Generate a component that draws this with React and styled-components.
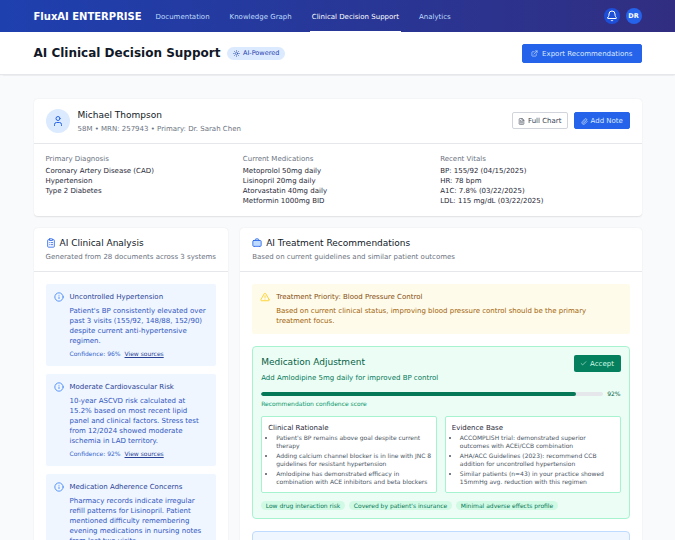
import React from 'react';
import styled, { createGlobalStyle } from 'styled-components';
import {
  Bell, BriefcaseMedical, ClipboardList, ExternalLink, FileText, Info, Paperclip,
  Check, Sun, TriangleAlert, User,
} from 'lucide-react';

const FONT = '"DejaVu Sans", sans-serif';

const NAV_LINKS = [
  { label: 'Documentation' },
  { label: 'Knowledge Graph' },
  { label: 'Clinical Decision Support', active: true },
  { label: 'Analytics' },
];

const SUMMARY = [
  { label: 'Primary Diagnosis', lines: ['Coronary Artery Disease (CAD)', 'Hypertension', 'Type 2 Diabetes'] },
  { label: 'Current Medications', lines: ['Metoprolol 50mg daily', 'Lisinopril 20mg daily', 'Atorvastatin 40mg daily', 'Metformin 1000mg BID'] },
  { label: 'Recent Vitals', lines: ['BP: 155/92 (04/15/2025)', 'HR: 78 bpm', 'A1C: 7.8% (03/22/2025)', 'LDL: 115 mg/dL (03/22/2025)'] },
];

const INSIGHTS = [
  {
    title: 'Uncontrolled Hypertension',
    body: "Patient's BP consistently elevated over past 3 visits (155/92, 148/88, 152/90) despite current anti-hypertensive regimen.",
    confidence: 96,
  },
  {
    title: 'Moderate Cardiovascular Risk',
    body: '10-year ASCVD risk calculated at 15.2% based on most recent lipid panel and clinical factors. Stress test from 12/2024 showed moderate ischemia in LAD territory.',
    confidence: 92,
  },
  {
    title: 'Medication Adherence Concerns',
    body: 'Pharmacy records indicate irregular refill patterns for Lisinopril. Patient mentioned difficulty remembering evening medications in nursing notes from last two visits.',
    confidence: 89,
  },
];

const RATIONALE = [
  "Patient's BP remains above goal despite current therapy",
  'Adding calcium channel blocker is in line with JNC 8 guidelines for resistant hypertension',
  'Amlodipine has demonstrated efficacy in combination with ACE inhibitors and beta blockers',
];

const EVIDENCE = [
  'ACCOMPLISH trial: demonstrated superior outcomes with ACEi/CCB combination',
  'AHA/ACC Guidelines (2023): recommend CCB addition for uncontrolled hypertension',
  'Similar patients (n=43) in your practice showed 15mmHg avg. reduction with this regimen',
];

const TAGS = ['Low drug interaction risk', "Covered by patient's insurance", 'Minimal adverse effects profile'];

export default function App() {
  return (
    <>
      <GlobalStyle />
      <TopBar>
        <Brand>FluxAI ENTERPRISE</Brand>
        <Nav>
          {NAV_LINKS.map((link) => (
            <NavLink key={link.label} $active={link.active}>{link.label}</NavLink>
          ))}
        </Nav>
        <TopActions>
          <BellButton><Bell size={12} color="#fff" strokeWidth={2} /></BellButton>
          <Initials>DR</Initials>
        </TopActions>
      </TopBar>

      <TitleBar>
        <TitleGroup>
          <PageTitle>AI Clinical Decision Support</PageTitle>
          <AiBadge><Sun size={7} strokeWidth={2} />AI-Powered</AiBadge>
        </TitleGroup>
        <PrimaryButton $wide><ExternalLink size={7} strokeWidth={2} />Export Recommendations</PrimaryButton>
      </TitleBar>

      <Main>
        <Card>
          <PatientRow>
            <Avatar><User size={12} color="#2563eb" strokeWidth={2} /></Avatar>
            <PatientText>
              <PatientName>Michael Thompson</PatientName>
              <PatientMeta>58M • MRN: 257943 • Primary: Dr. Sarah Chen</PatientMeta>
            </PatientText>
            <PatientActions>
              <GhostButton><FileText size={7} strokeWidth={2} />Full Chart</GhostButton>
              <PrimaryButton><Paperclip size={7} strokeWidth={2} />Add Note</PrimaryButton>
            </PatientActions>
          </PatientRow>
          <SummaryGrid>
            {SUMMARY.map((col) => (
              <div key={col.label}>
                <SummaryLabel>{col.label}</SummaryLabel>
                {col.lines.map((line) => <SummaryLine key={line}>{line}</SummaryLine>)}
              </div>
            ))}
          </SummaryGrid>
        </Card>

        <Columns>
          <Card>
            <CardHead>
              <CardTitle><ClipboardList size={10} color="#2563eb" strokeWidth={2} />AI Clinical Analysis</CardTitle>
              <CardSub>Generated from 28 documents across 3 systems</CardSub>
            </CardHead>
            <CardBody>
              {INSIGHTS.map((item) => (
                <InsightBox key={item.title}>
                  <AlertIcon><Info size={10} color="#3b82f6" strokeWidth={2} /></AlertIcon>
                  <div>
                    <InsightTitle>{item.title}</InsightTitle>
                    <InsightBody>{item.body}</InsightBody>
                    <InsightMeta>
                      <span>Confidence: {item.confidence}%</span>
                      <SourceLink>View sources</SourceLink>
                    </InsightMeta>
                  </div>
                </InsightBox>
              ))}
            </CardBody>
          </Card>

          <Card>
            <CardHead>
              <CardTitle><BriefcaseMedical size={10} color="#2563eb" strokeWidth={2} fill="#bfdbfe" />AI Treatment Recommendations</CardTitle>
              <CardSub>Based on current guidelines and similar patient outcomes</CardSub>
            </CardHead>
            <CardBody>
              <PriorityBox>
                <AlertIcon><TriangleAlert size={10} color="#facc15" strokeWidth={2} /></AlertIcon>
                <div>
                  <PriorityTitle>Treatment Priority: Blood Pressure Control</PriorityTitle>
                  <PriorityBody>
                    Based on current clinical status, improving blood pressure control should be the primary treatment focus.
                  </PriorityBody>
                </div>
              </PriorityBox>

              <RecCard>
                <RecHead>
                  <div>
                    <RecTitle>Medication Adjustment</RecTitle>
                    <RecSub>Add Amlodipine 5mg daily for improved BP control</RecSub>
                  </div>
                  <AcceptButton><Check size={7} strokeWidth={2} />Accept</AcceptButton>
                </RecHead>
                <ScoreRow>
                  <ScoreTrack><ScoreFill style={{ width: '92%' }} /></ScoreTrack>
                  <ScoreValue>92%</ScoreValue>
                </ScoreRow>
                <ScoreCaption>Recommendation confidence score</ScoreCaption>
                <ReasonGrid>
                  <ReasonBox>
                    <ReasonTitle>Clinical Rationale</ReasonTitle>
                    <ReasonList>{RATIONALE.map((t) => <li key={t}>{t}</li>)}</ReasonList>
                  </ReasonBox>
                  <ReasonBox>
                    <ReasonTitle>Evidence Base</ReasonTitle>
                    <ReasonList>{EVIDENCE.map((t) => <li key={t}>{t}</li>)}</ReasonList>
                  </ReasonBox>
                </ReasonGrid>
                <TagRow>{TAGS.map((t) => <Tag key={t}>{t}</Tag>)}</TagRow>
              </RecCard>

              <NextCard />
            </CardBody>
          </Card>
        </Columns>
      </Main>
    </>
  );
}

const GlobalStyle = createGlobalStyle`
  * { box-sizing: border-box; }
  html, body {
    margin: 0;
    height: 540px;
    overflow: hidden;
    background: #f9fafb;
    font-family: ${FONT};
    color: #111827;
  }
`;

const TopBar = styled.header`
  display: flex;
  align-items: center;
  height: 32px;
  padding: 0 33.5px;
  background: linear-gradient(90deg, #1e40af, #312e81);
`;

const Brand = styled.div`
  font-size: 10px;
  font-weight: 700;
  color: #fff;
  margin-right: 12px;
`;

const Nav = styled.nav`
  display: flex;
  gap: 16px;
  height: 100%;
`;

const NavLink = styled.a`
  display: flex;
  align-items: center;
  padding: 2px 2px 0;
  font-size: 7px;
  font-weight: 500;
  color: ${({ $active }) => ($active ? '#fff' : '#bfdbfe')};
  border-bottom: 1px solid ${({ $active }) => ($active ? '#fff' : 'transparent')};
`;

const TopActions = styled.div`
  display: flex;
  align-items: center;
  gap: 6px;
  margin-left: auto;
`;

const BellButton = styled.div`
  display: flex;
  align-items: center;
  justify-content: center;
  width: 16px;
  height: 16px;
  border-radius: 50%;
  background: #1d4ed8;
`;

const Initials = styled(BellButton)`
  background: #2563eb;
  color: #fff;
  font-size: 6.5px;
  font-weight: 700;
`;

const TitleBar = styled.div`
  display: flex;
  align-items: center;
  justify-content: space-between;
  height: 43px;
  padding: 0 33.5px;
  background: #fff;
  border-bottom: 0.5px solid #e5e7eb;
  box-shadow: 0 0.5px 1px rgba(0, 0, 0, 0.05);
`;

const TitleGroup = styled.div`
  display: flex;
  align-items: center;
  gap: 7px;
`;

const PageTitle = styled.h1`
  margin: 0;
  font-size: 12px;
  line-height: 16px;
  font-weight: 700;
`;

const AiBadge = styled.span`
  display: inline-flex;
  align-items: center;
  gap: 2.5px;
  height: 13px;
  padding: 0 6px;
  border-radius: 7px;
  background: #dbeafe;
  color: #1e40af;
  font-size: 6.5px;
  font-weight: 500;
`;

const ButtonBase = styled.button`
  display: inline-flex;
  align-items: center;
  justify-content: center;
  gap: 3px;
  border-radius: 2px;
  font-family: ${FONT};
  font-size: 7px;
  line-height: 10px;
  font-weight: 500;
  padding: 1px 0 0;
`;

const PrimaryButton = styled(ButtonBase)`
  width: ${({ $wide }) => ($wide ? '119.5px' : '55.5px')};
  height: ${({ $wide }) => ($wide ? '19px' : '17px')};
  gap: ${({ $wide }) => ($wide ? '4px' : '3px')};
  background: #2563eb;
  border: 0.5px solid #2563eb;
  color: #dbeafe;
`;

const GhostButton = styled(ButtonBase)`
  width: 56.5px;
  height: 17px;
  background: #fff;
  border: 0.5px solid #d1d5db;
  color: #374151;
`;

const Main = styled.main`
  padding: 24px 33.5px;
`;

const Card = styled.section`
  background: #fff;
  border-radius: 4px;
  box-shadow: 0 0.5px 1.5px rgba(0, 0, 0, 0.1);
  overflow: hidden;
`;

const PatientRow = styled.div`
  display: flex;
  align-items: center;
  height: 44.5px;
  padding: 0 12px;
  border-bottom: 0.5px solid #e5e7eb;
`;

const Avatar = styled.div`
  display: flex;
  align-items: center;
  justify-content: center;
  width: 24px;
  height: 24px;
  border-radius: 50%;
  background: #dbeafe;
  margin-right: 8px;
`;

const PatientText = styled.div`
  flex: 1;
`;

const PatientName = styled.div`
  font-size: 9px;
  line-height: 14px;
  font-weight: 500;
`;

const PatientMeta = styled.div`
  font-size: 7px;
  line-height: 10px;
  margin-top: 2px;
  color: #6b7280;
`;

const PatientActions = styled.div`
  display: flex;
  gap: 6px;
`;

const SummaryGrid = styled.div`
  display: grid;
  grid-template-columns: repeat(3, 1fr);
  gap: 8px;
  padding: 10.5px 12px 10px;
`;

const SummaryLabel = styled.div`
  font-size: 7px;
  line-height: 10px;
  color: #6b7280;
  margin-bottom: 1.5px;
`;

const SummaryLine = styled.div`
  font-size: 7px;
  line-height: 10px;
  color: #1f2937;
`;

const Columns = styled.div`
  display: grid;
  grid-template-columns: repeat(12, 1fr);
  gap: 12px;
  margin-top: 12px;

  & > :first-child { grid-column: span 4; }
  & > :last-child { grid-column: span 8; }
`;

const CardHead = styled.div`
  height: 44px;
  padding: 8.5px 12px 0;
  border-bottom: 0.5px solid #e5e7eb;
`;

const CardTitle = styled.h2`
  display: flex;
  align-items: center;
  gap: 4px;
  margin: 0;
  font-size: 9px;
  line-height: 14px;
  font-weight: 500;
  color: #111827;
`;

const CardSub = styled.div`
  font-size: 7px;
  line-height: 10px;
  margin-top: 2px;
  color: #6b7280;
`;

const CardBody = styled.div`
  padding: 12px;
`;

const AlertIcon = styled.div`
  display: flex;
  flex: none;
  width: 10px;
  height: 10px;
  margin-right: 6px;
`;

const InsightBox = styled.div`
  display: flex;
  padding: 8px;
  border-radius: 2px;
  background: #eff6ff;

  & + & { margin-top: 8px; }
`;

const InsightTitle = styled.div`
  font-size: 7px;
  line-height: 10px;
  font-weight: 500;
  color: #2a4296;
`;

const InsightBody = styled.div`
  margin-top: 4px;
  font-size: 7px;
  line-height: 10px;
  color: #2f55c0;
`;

const InsightMeta = styled.div`
  display: flex;
  gap: 4px;
  margin-top: 4px;
  font-size: 6px;
  line-height: 8px;
  color: #3563c9;
`;

const SourceLink = styled.span`
  color: #2a4296;
  text-decoration: underline;
`;

const PriorityBox = styled.div`
  display: flex;
  padding: 8px;
  border-radius: 2px;
  background: #fffbeb;
`;

const PriorityTitle = styled.div`
  font-size: 7px;
  line-height: 10px;
  font-weight: 500;
  color: #854d0e;
`;

const PriorityBody = styled.div`
  margin-top: 4px;
  font-size: 7px;
  line-height: 10px;
  color: #a16207;
`;

const RecCard = styled.div`
  margin-top: 12px;
  padding: 8px;
  border: 0.5px solid #a7f3d0;
  border-radius: 4px;
  background: #ecfdf5;
`;

const RecHead = styled.div`
  display: flex;
  justify-content: space-between;
  align-items: flex-start;
`;

const RecTitle = styled.div`
  font-size: 9px;
  line-height: 14px;
  font-weight: 500;
  color: #065f46;
`;

const RecSub = styled.div`
  margin-top: 4px;
  font-size: 7px;
  line-height: 10px;
  font-weight: 500;
  color: #047857;
`;

const AcceptButton = styled(ButtonBase)`
  width: 47px;
  height: 17.5px;
  background: #05805f;
  border: none;
  color: #d1fae5;
`;

const ScoreRow = styled.div`
  display: flex;
  align-items: center;
  gap: 4px;
  margin-top: 7px;
`;

const ScoreTrack = styled.div`
  flex: 1;
  height: 4px;
  border-radius: 2px;
  background: #e5e7eb;
  overflow: hidden;
`;

const ScoreFill = styled.div`
  height: 100%;
  border-radius: 2px;
  background: #047857;
`;

const ScoreValue = styled.span`
  font-size: 6px;
  line-height: 8px;
  color: #065f46;
`;

const ScoreCaption = styled.div`
  margin-top: 2px;
  font-size: 6px;
  line-height: 8px;
  color: #059669;
`;

const ReasonGrid = styled.div`
  display: grid;
  grid-template-columns: 1fr 1fr;
  gap: 8px;
  margin-top: 8px;
`;

const ReasonBox = styled.div`
  height: 77px;
  padding: 6px 4px 6px 6px;
  background: #fff;
  border: 0.5px solid #a7f3d0;
  border-radius: 2px;
`;

const ReasonTitle = styled.div`
  font-size: 7px;
  line-height: 10px;
  font-weight: 500;
  color: #1f2937;
`;

const ReasonList = styled.ul`
  margin: 1.5px 0 0;
  padding: 0 0 0 8px;
  list-style: disc;
  font-size: 6px;
  line-height: 8px;
  color: #4b5563;

  li + li { margin-top: 2px; }
`;

const TagRow = styled.div`
  display: flex;
  gap: 4.5px;
  margin-top: 8px;
`;

const Tag = styled.span`
  height: 9.5px;
  padding: 0 4.5px;
  border-radius: 5px;
  background: #d1fae5;
  color: #047857;
  font-size: 6px;
  line-height: 9.5px;
  font-weight: 500;
`;

const NextCard = styled.div`
  height: 60px;
  margin-top: 12px;
  border: 0.5px solid #bfdbfe;
  border-radius: 4px;
  background: #eff6ff;
`;
